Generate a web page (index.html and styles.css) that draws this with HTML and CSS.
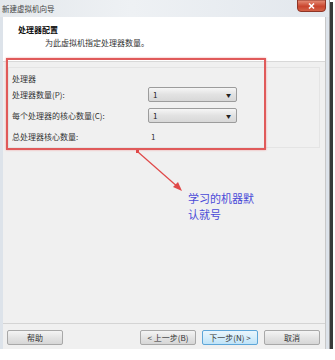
FILE: index.html
```html
<!DOCTYPE html>
<html>
<head>
  <meta charset="utf-8">
  <title>新建虚拟机向导</title>
  <link rel="stylesheet" href="styles.css">
</head>
<body>
  <div class="window">
    <div class="titlebar">
      <span class="title">新建虚拟机向导</span>
      <svg class="close" width="29" height="12" viewBox="0 0 29 12">
        <defs>
          <linearGradient id="cg" x1="0" y1="0" x2="0" y2="1">
            <stop offset="0" stop-color="#e8937c"/>
            <stop offset="0.55" stop-color="#c9452e"/>
            <stop offset="1" stop-color="#d6654a"/>
          </linearGradient>
        </defs>
        <path d="M0.5 0 H28.5 V8 Q28.5 11.5 25 11.5 H4 Q0.5 11.5 0.5 8 Z" fill="url(#cg)" stroke="#8e3526"/>
        <path d="M12 3.5 L17 8.5 M17 3.5 L12 8.5" stroke="#fff" stroke-width="1.6"/>
      </svg>
    </div>
    <div class="frame">
      <div class="header">
        <div class="h-title">处理器配置</div>
        <div class="h-sub">为此虚拟机指定处理器数量。</div>
      </div>
      <div class="body">
        <div class="group">
          <div class="group-label">处理器</div>
          <div class="row">
            <span class="label">处理器数量(P):</span>
            <div class="select"><span>1</span><span class="caret">▼</span></div>
          </div>
          <div class="row">
            <span class="label">每个处理器的核心数量(C):</span>
            <div class="select"><span>1</span><span class="caret">▼</span></div>
          </div>
          <div class="row">
            <span class="label">总处理器核心数量:</span>
            <span class="value">1</span>
          </div>
        </div>
      </div>
      <div class="footer">
        <button class="btn">帮助</button>
        <div class="spacer"></div>
        <button class="btn">&lt; 上一步(B)</button>
        <button class="btn primary">下一步(N) &gt;</button>
        <button class="btn">取消</button>
      </div>
    </div>

    <div class="mark"></div>
    <svg class="arrow" width="60" height="50" viewBox="0 0 60 50">
      <line x1="3" y1="2" x2="44" y2="38" stroke="#e04848" stroke-width="1.2"/>
      <polygon points="47,41 38,37 43,32" fill="#e04848"/>
      <rect x="1" y="0" width="3" height="3" fill="#e04848"/>
    </svg>
    <div class="note">
      <div>学习的机器默</div>
      <div>认就号</div>
    </div>
  </div>
</body>
</html>
```

FILE: styles.css
```css
body {
  margin: 0;
  background: #fff;
  font-family: "Noto Sans CJK SC", "DejaVu Sans", sans-serif;
  color: #333;
}
.window {
  position: relative;
  width: 329px;
  height: 349px;
  background: #dde3ea;
  border-right: 1px solid #9a9a9a;
  box-shadow: 3px 2px 0 #3a3a3a;
  display: flex;
  flex-direction: column;
}
.titlebar {
  height: 17px;
  flex-shrink: 0;
  display: flex;
  align-items: flex-start;
  background: linear-gradient(90deg, #e4e8ec, #eef1f4 40%, #e2e7ed);
}
.title {
  flex: 1;
  font-size: 7.5px;
  color: #444;
  padding: 3px 0 0 2px;
}
.close {
  display: block;
  margin-right: 3px;
}
.frame {
  flex: 1;
  margin: 0 3px 0 3px;
  display: flex;
  flex-direction: column;
  background: #f0f0f0;
  border-right: 1px solid #c8c8c8;
}
.header {
  height: 45px;
  background: #fff;
  border-bottom: 1px solid #d8d8d8;
  box-sizing: border-box;
  padding: 8px 0 0 15px;
}
.h-title {
  font-size: 8px;
  font-weight: bold;
  color: #111;
  line-height: 10px;
}
.h-sub {
  font-size: 8px;
  color: #333;
  line-height: 10px;
  padding: 3px 0 0 27px;
}
.body {
  flex: 1;
  padding: 5px 5px 0 5px;
}
.group {
  height: 81px;
  border: 1px solid #e4e4e4;
  box-sizing: border-box;
  padding: 6px 0 0 3px;
}
.group-label {
  font-size: 8px;
  line-height: 10px;
  color: #333;
}
.row {
  display: flex;
  align-items: center;
  height: 21px;
}
.label {
  width: 136px;
  font-size: 8px;
  color: #333;
}
.select {
  width: 89px;
  height: 15px;
  box-sizing: border-box;
  border: 1px solid #9c9c9c;
  border-radius: 2px;
  background: linear-gradient(#f6f6f6, #e2e2e2 50%, #d8d8d8);
  display: flex;
  align-items: center;
  justify-content: space-between;
  padding: 0 5px 0 4px;
  font-size: 8px;
  color: #222;
}
.caret {
  font-size: 5px;
}
.value {
  font-size: 8px;
  padding-left: 3px;
}
.footer {
  height: 26px;
  border-top: 1px solid #d4d4d4;
  display: flex;
  align-items: center;
  gap: 6px;
  padding: 2px 5px 0 4px;
  box-sizing: border-box;
}
.spacer {
  flex: 1;
}
.btn {
  width: 56px;
  height: 15px;
  padding: 0;
  font-family: inherit;
  font-size: 8px;
  color: #333;
  border: 1px solid #a8a8a8;
  border-radius: 2px;
  background: linear-gradient(#f4f4f4, #e4e4e4 50%, #d6d6d6);
}
.btn.primary {
  border-color: #5ea6d8;
  background: linear-gradient(#eaf6fd, #d6eefb 50%, #bfe3f8);
}
.mark {
  position: absolute;
  left: 6px;
  top: 58px;
  width: 260px;
  height: 92px;
  box-sizing: border-box;
  border: 2px solid #e05a5a;
  box-shadow: 0 0 2px #f0a0a0;
}
.arrow {
  position: absolute;
  left: 135px;
  top: 150px;
}
.note {
  position: absolute;
  left: 188px;
  top: 190px;
  font-size: 11px;
  line-height: 16px;
  color: #4a4ad8;
}
```
